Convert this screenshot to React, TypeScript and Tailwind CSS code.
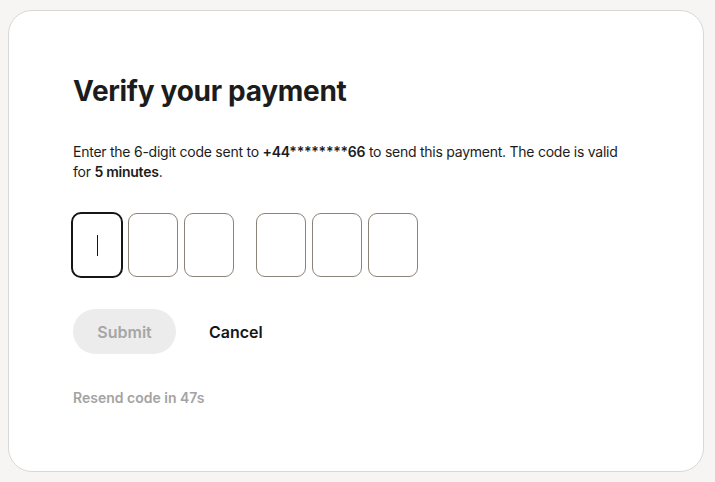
import React from 'react';

const digits = [0, 1, 2];

export default function App() {
  return (
    <div className="min-h-[482px] w-[715px] bg-[#f6f5f3] pl-2 pr-[11px] pt-[10px] pb-[10px] font-['Inter',sans-serif] text-[#1c1c1c]">
      <div className="h-[462px] rounded-[24px] border border-[#dad8d4] bg-white px-16 pt-[62px]">
        <h1 className="text-[28px] font-bold leading-[36px] tracking-[-0.3px]">Verify your payment</h1>

        <p className="mt-[33px] max-w-[558px] text-[14px] leading-[20px] tracking-[-0.25px]">
          Enter the 6-digit code sent to <span className="font-semibold">+44********66</span> to send this payment. The code is valid for <span className="font-semibold">5 minutes</span>.
        </p>

        <div className="-ml-px mt-[31px] flex items-center gap-[22px]">
          {[0, 1].map((g) => (
            <div key={g} className="flex gap-[6px]">
              {digits.map((i) => {
                const focused = g === 0 && i === 0;
                return (
                  <div
                    key={i}
                    className={
                      focused
                        ? '-m-px flex h-[66px] w-[52px] items-center justify-center rounded-[10px] border-2 border-[#161616]'
                        : 'h-[64px] w-[50px] rounded-[9px] border border-[#8b8378]'
                    }
                  >
                    {focused && <span className="h-[21px] w-px bg-[#161616]" />}
                  </div>
                );
              })}
            </div>
          ))}
        </div>

        <div className="mt-[32px] flex items-center gap-[33px]">
          <button className="h-[45px] w-[103px] rounded-full bg-[#ececec] text-[16px] font-semibold text-[#a6a6a6]">
            Submit
          </button>
          <button className="text-[16px] font-semibold text-[#161616]">Cancel</button>
        </div>

        <p className="mt-[33px] text-[14px] font-semibold text-[#a3a3a3]">Resend code in 47s</p>
      </div>
    </div>
  );
}
